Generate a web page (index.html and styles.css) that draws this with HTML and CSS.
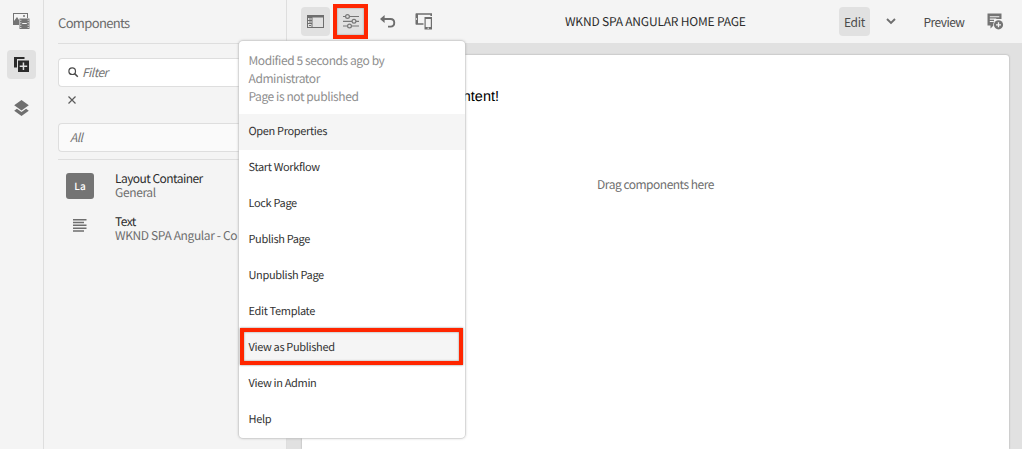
FILE: index.html
```
<!DOCTYPE html>
<html lang="en">
<head>
<meta charset="utf-8">
<title>WKND SPA Angular Home Page</title>
<link rel="stylesheet" href="styles.css">
</head>
<body>
<div class="editor">
  <nav class="rail">
    <button class="rail-btn" aria-label="Assets">
      <svg width="17" height="17" viewBox="0 0 17 17"><path fill="#747474" fill-rule="evenodd" d="M0 0h15v5h-1V1H1v7l3-4 2 3v5H0z"/><circle cx="11" cy="3" r="1" fill="#747474"/><path fill="#747474" fill-rule="evenodd" d="M6.500 5.500H16.500V16H6.500zM7.300 6.800v1h1v-1zM7.300 9.300v1h1v-1zM7.300 11.800v1h1v-1zM7.300 14v1h1v-1zM14.700 6.800v1h1v-1zM14.700 9.300v1h1v-1zM14.700 11.800v1h1v-1zM14.700 14v1h1v-1zM9.200 10v1h4.600v-1z"/></svg>
    </button>
    <button class="rail-btn selected" aria-label="Components">
      <svg width="15" height="15" viewBox="0 0 15 15"><path fill="#2b2b2b" d="M0 0h10.500v2H3v8.500H0z"/><path fill="#2b2b2b" fill-rule="evenodd" d="M4 3.500h11V15H4zM8.700 5.500v3H5.700v1.500h3v3h1.500v-3h3V8.500h-3v-3z"/></svg>
    </button>
    <button class="rail-btn" aria-label="Content tree">
      <svg width="15" height="16" viewBox="0 0 15 16"><path fill="#6f6f6f" d="M7.500 0 14.800 5.200 7.500 10.400.2 5.200zM2.900 8.700l4.600 3.300 4.600-3.300 2.700 2-7.300 5.300L.2 10.700z"/></svg>
    </button>
  </nav>
  <aside class="panel">
    <h1 class="panel-title">Components</h1>
    <div class="filter field">
      <svg width="11" height="11" viewBox="0 0 11 11" fill="none" stroke="#4b4b4b" stroke-width="1.200"><circle cx="4.200" cy="4.200" r="3.300"/><path d="m6.600 6.600 3.200 3.200" stroke-width="1.500"/></svg>
      <span>Filter</span>
    </div>
    <svg class="clear" width="8" height="8" viewBox="0 0 8 8" stroke="#5b5b5b" stroke-width="1.200"><path d="m.5.500 7 7M7.500.5.5 7.500"/></svg>
    <div class="group field"><span>All</span></div>
    <ul class="components">
      <li class="component"><span class="badge">La</span><div class="label"><span class="name">Layout Container</span><small>General</small></div></li>
      <li class="component"><span class="text-icon"><svg width="14" height="13" viewBox="0 0 14 13" fill="#6e6e6e"><path d="M0 0h13.500v1.500H0zM0 2.800h11v1.500H0zM0 5.600h13.500v1.500H0zM0 8.400h13.500v1.500H0zM0 11.200h11v1.500H0z"/></svg></span><div class="label"><span class="name">Text</span><small>WKND SPA Angular - Co</small></div></li>
    </ul>
  </aside>
  <main class="main">
    <header class="toolbar">
      <button class="tool selected" aria-label="Toggle side panel">
        <svg width="17" height="13" viewBox="0 0 17 13"><path fill="#6e6e6e" fill-rule="evenodd" d="M0 0h17v13H0zM5.500 2.500v9.500H16V2.500zM1 3v2h3.500V3zM1 6v2h3.500V6zM1 9v3h3.500V9z"/><path stroke="#6e6e6e" d="M2 4h2M2 7h2M2 10.500h2"/></svg>
      </button>
      <button class="tool highlighted" aria-label="Page information">
        <svg width="16" height="15" viewBox="0 0 16 15" fill="none" stroke="#777" stroke-width="1.200"><path d="M0 2.500h2.500M6.500 2.500H16M0 7.300h9M13 7.300h3M0 12h4.500M8.500 12H16"/><circle cx="4.500" cy="2.500" r="1.900"/><circle cx="11" cy="7.300" r="1.900"/><circle cx="6.500" cy="12" r="1.900"/></svg>
      </button>
      <button class="tool undo" aria-label="Undo">
        <svg width="16" height="13" viewBox="0 0 16 13"><path fill="none" stroke="#6e6e6e" stroke-width="1.900" d="M3 4h7.500c5 0 5 7.600 0 7.600H8"/><path fill="#6e6e6e" d="M0 4 4.600 0v8z"/></svg>
      </button>
      <button class="tool emulator" aria-label="Emulator">
        <svg width="18" height="17" viewBox="0 0 18 17"><path fill="none" stroke="#6e6e6e" stroke-width="1.600" d="M16.200 3V1H1.500v10h7"/><path fill="#6e6e6e" d="M.7 1h2.300v10H.7z"/><path fill="#f4f4f4" d="M1 5.200h1v1.500H1z"/><path fill="#6e6e6e" fill-rule="evenodd" d="M9.500 4H17v12.500H9.500zM10.700 6v8h5.100V6z"/><path stroke="#f4f4f4" d="M12.500 15.200h1.500"/></svg>
      </button>
      <h2 class="page-title">WKND SPA ANGULAR HOME PAGE</h2>
      <button class="edit">Edit</button>
      <svg class="chevron" width="10" height="7" viewBox="0 0 10 7" fill="none" stroke="#6e6e6e" stroke-width="1.900"><path d="m1 1 4 4 4-4"/></svg>
      <button class="preview">Preview</button>
      <svg class="annotate" width="17" height="17" viewBox="0 0 17 17"><path fill="#747474" d="M.5.500h14V6H7v6.500h-.5l-3 3v-3h-3z"/><path stroke="#f4f4f4" stroke-width="1.100" d="M2.800 3.700h9.500M2.800 6.100h6.500M2.800 8.500h4"/><circle cx="11.500" cy="11.800" r="5.300" fill="#f4f4f4"/><circle cx="11.500" cy="11.800" r="4.600" fill="#747474"/><path stroke="#f4f4f4" stroke-width="1.300" d="M11.500 9.300v5M9 11.800h5"/></svg>
    </header>
    <section class="page">
      <p class="content">content!</p>
      <p class="dropzone">Drag components here</p>
    </section>
  </main>
  <div class="menu">
    <div class="status">Modified 5 seconds ago by Administrator<br>Page is not published</div>
    <a class="item hover">Open Properties</a>
    <a class="item">Start Workflow</a>
    <a class="item">Lock Page</a>
    <a class="item">Publish Page</a>
    <a class="item">Unpublish Page</a>
    <a class="item">Edit Template</a>
    <a class="item marked">View as Published</a>
    <a class="item">View in Admin</a>
    <a class="item">Help</a>
  </div>
</div>
</body>
</html>
```

FILE: styles.css
```
* { box-sizing: border-box; }
body, h1, h2, p, ul { margin: 0; padding: 0; }
body { font-family: "Noto Sans CJK SC", "Open Sans", sans-serif; font-size: 12px; color: #4b4b4b; text-rendering: geometricPrecision; }
button { border: 0; padding: 0; background: none; font: inherit; color: inherit; }
svg { display: block; flex: none; }

.editor { position: relative; display: flex; width: 1022px; height: 449px; overflow: hidden; background: #f4f4f4; }

.rail { width: 44px; flex: none; border-right: 1px solid #dedede; padding-top: 7px; display: flex; flex-direction: column; align-items: center; gap: 14px; }
.rail-btn { width: 29px; height: 29px; border-radius: 4px; display: grid; place-items: center; }
.rail-btn.selected { background: #e1e1e1; }

.panel { width: 243px; flex: none; border-right: 1px solid #dedede; padding-left: 14px; }
.panel-title { height: 44px; border-bottom: 1px solid #dedede; font-size: 13px; font-weight: 400; line-height: 45px; letter-spacing: -.65px; color: #6a6a6a; }
.field { border: 1px solid #dedede; border-right: 0; border-radius: 4px 0 0 4px; height: 29px; display: flex; align-items: center; font-style: italic; letter-spacing: -.55px; color: #747474; }
.filter { margin-top: 14px; background: #fff; padding-left: 9px; gap: 3px; }
.clear { margin: 9px 0 0 10px; }
.group { margin-top: 19px; background: #fafafa; padding-left: 11px; }
.components { list-style: none; margin-top: 7px; border-top: 1px solid #dedede; padding: 11px 0 0 8px; }
.component { display: flex; height: 43px; white-space: nowrap; }
.label { padding-top: 1px; }
.badge, .text-icon { width: 28px; margin-right: 21px; flex: none; display: grid; place-items: center; }
.badge { height: 26px; margin-top: 2px; border-radius: 3px; background: #747474; color: #fff; font-size: 10px; line-height: 24px; font-weight: 500; }
.text-icon { height: 26px; margin-top: -2px; }
.name, .component small { display: block; font-size: 12px; line-height: 14px; letter-spacing: -.37px; }
.name { color: #2c2c2c; letter-spacing: -.55px; }
.component small { color: #6e6e6e; }

.main { flex: 1; min-width: 0; display: flex; flex-direction: column; background: #e1e1e1; }
.toolbar { height: 43px; flex: none; background: #f4f4f4; display: flex; align-items: center; padding: 0 18px 0 14px; }
.tool { width: 29px; height: 29px; flex: none; display: grid; place-items: center; border-radius: 4px; }
.tool.selected { background: #e1e1e1; }
.tool.highlighted { width: 35px; height: 35px; margin-left: 3px; border: 4px solid #ff2600; border-radius: 0; background: #e1e1e1; box-shadow: inset 0 0 2px #888; }
.undo { margin-left: 5px; }
.emulator { margin-left: 7px; }
.page-title { width: 182px; margin-left: 127px; font-size: 12px; font-weight: 400; letter-spacing: -.19px; color: #2c2c2c; white-space: nowrap; }
.edit { width: 31px; height: 29px; margin-left: 92px; border-radius: 4px; background: #e1e1e1; letter-spacing: -.3px; }
.chevron { margin-left: 16px; }
.preview { margin-left: 27px; width: 42px; letter-spacing: -.55px; white-space: nowrap; }
.annotate { margin-left: 22px; }
.page { flex: 1; margin: 12px 13px 0 15px; background: #fff; border-radius: 3px 3px 0 0; box-shadow: 0 0 2px #999; padding-top: 32px; }
.content { width: 197px; text-align: right; font: 14.5px/20px "Liberation Sans", Arial, sans-serif; color: #000; }
.dropzone { margin-top: 68px; text-align: center; line-height: 20px; letter-spacing: -.5px; color: #6e6e6e; }

/* Popover covering the panel and canvas */
.menu { position: absolute; left: 239px; top: 41px; width: 226px; height: 397px; border-radius: 4px; background: #fff; box-shadow: 0 0 0 .5px #cfcfcf, 0 0 3px rgba(0,0,0,.35); display: flex; flex-direction: column; }
.status { height: 73px; padding: 11px 60px 0 9.500px; font-size: 12px; line-height: 18px; letter-spacing: -.42px; color: #8e8e8e; }
.item { height: 36px; flex: none; padding-left: 9.500px; font-size: 11px; line-height: 35px; letter-spacing: -.34px; color: #323232; }
.item.hover { background: #f5f5f5; }
.item.marked { height: 37px; margin: -2px 2px 1px 1px; padding-left: 4.500px; border: 4px solid #ff2600; line-height: 31px; background: #f5f5f5; box-shadow: 0 0 2px #888, inset 0 0 2px #888; }
```
